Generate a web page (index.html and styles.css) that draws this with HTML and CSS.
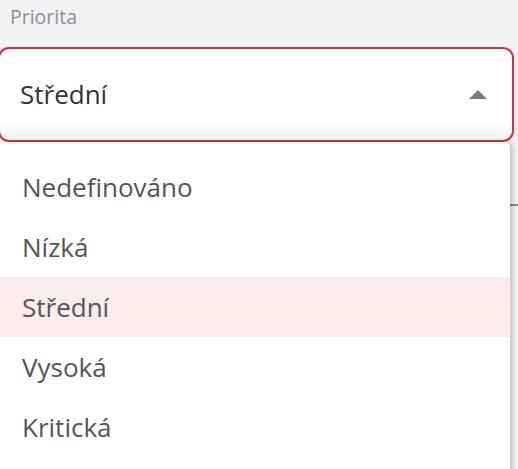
FILE: index.html
```html
<!DOCTYPE html>
<html lang="cs">
<head>
<meta charset="utf-8">
<link rel="stylesheet" href="styles.css">
</head>
<body>
<div class="field">
  <div class="label">Priorita</div>
  <div class="select">
    <span class="value">Střední</span>
    <svg class="arrow" width="18" height="10" viewBox="0 0 18 10"><path d="M0 9 L9 0 L18 9 Z" fill="#7a7a7a"/></svg>
  </div>
  <div class="under">
    <div class="divider"></div>
    <ul class="menu">
      <li class="item">Nedefinováno</li>
      <li class="item">Nízká</li>
      <li class="item active">Střední</li>
      <li class="item">Vysoká</li>
      <li class="item">Kritická</li>
    </ul>
  </div>
</div>
</body>
</html>
```

FILE: styles.css
```css
html, body {
  margin: 0;
  padding: 0;
  background: #f1f2f4;
  font-family: "Open Sans", "Noto Sans", sans-serif;
  overflow: hidden;
}
.field {
  width: 518px;
  height: 469px;
  overflow: hidden;
}
.label {
  box-sizing: border-box;
  height: 47px;
  padding: 3px 0 0 10px;
  font-size: 19.5px;
  line-height: 27px;
  color: #8f8f8f;
}
.select {
  margin: 0 0 0 -2px;
  height: 91px;
  border: 2px solid #cf3340;
  border-radius: 11px;
  background: linear-gradient(to bottom, #ffffff 0, #ffffff 80%, #f3f3f3 100%);
  display: flex;
  align-items: center;
  justify-content: space-between;
  padding: 0 25px 0 20px;
  box-sizing: content-box;
  width: 467px;
}
.value {
  font-size: 26px;
  color: #333333;
  line-height: 34px;
  margin-top: -2px;
}
.arrow {
  display: block;
}
.under {
  position: relative;
  padding-top: 62px;
}
.divider {
  height: 2px;
  background: #8c8c8c;
}
.menu {
  position: absolute;
  top: 0;
  left: 0;
  width: 510px;
  height: 340px;
  margin: 0;
  padding: 15px 0 0 0;
  list-style: none;
  background: #ffffff;
  border-radius: 0 5px 0 0;
  box-shadow: 3px 0 4px rgba(0,0,0,0.18);
}
.item {
  height: 60px;
  line-height: 60px;
  padding-left: 22px;
  font-size: 26px;
  color: #555555;
}
.item.active {
  background: #fbeced;
}
```
